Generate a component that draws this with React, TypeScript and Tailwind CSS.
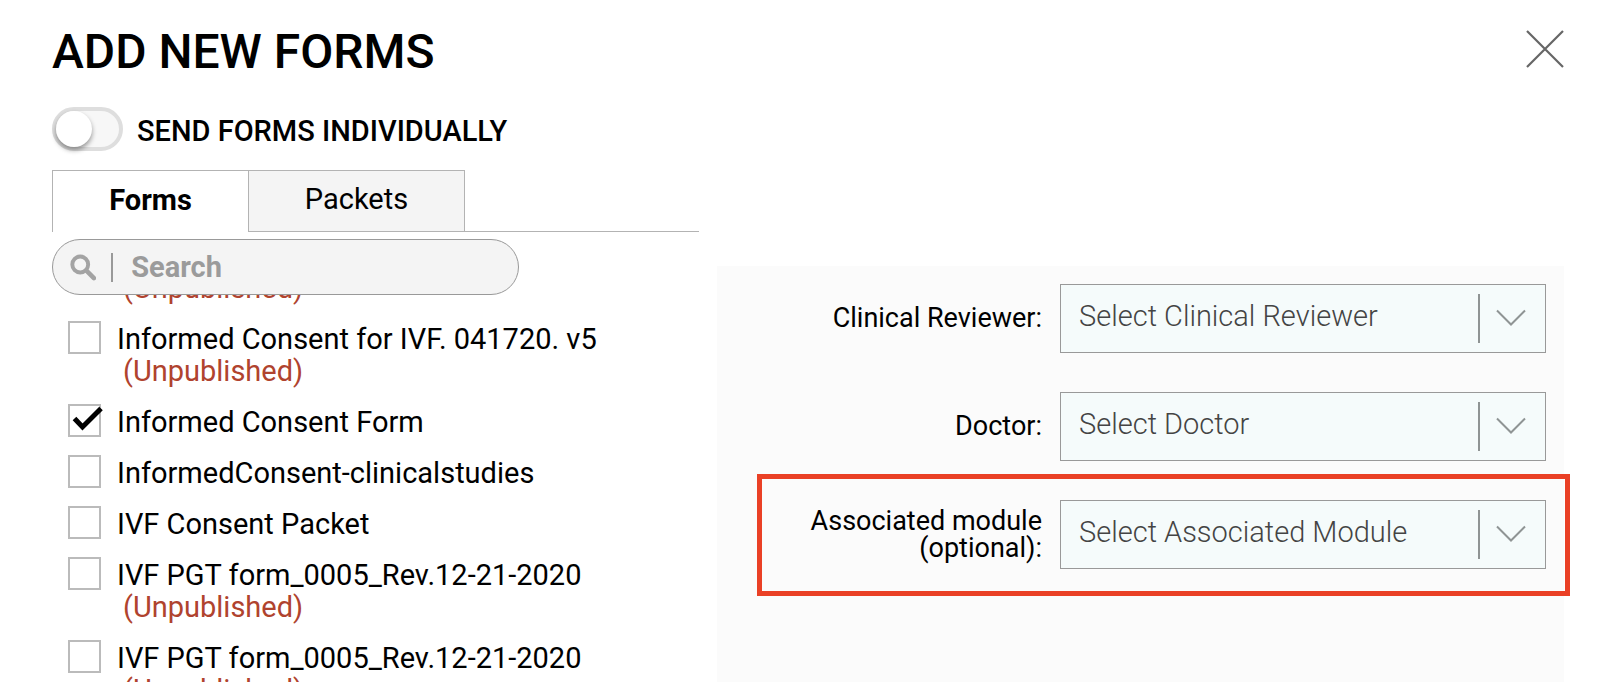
import { useState } from "react";

const forms = [
  { id: "ivf-041720", name: "Informed Consent for IVF. 041720. v5", unpublished: true },
  { id: "icf", name: "Informed Consent Form", unpublished: false },
  { id: "clinical", name: "InformedConsent-clinicalstudies", unpublished: false },
  { id: "ivf-packet", name: "IVF Consent Packet", unpublished: false },
  { id: "pgt-1", name: "IVF PGT form_0005_Rev.12-21-2020", unpublished: true },
  { id: "pgt-2", name: "IVF PGT form_0005_Rev.12-21-2020", unpublished: true },
];

function Unpublished() {
  return <span className="block pl-[6px] text-[#b0432e]">(Unpublished)</span>;
}

function FormRow({ id, name, unpublished, checked, onToggle }: {
  id: string;
  name: string;
  unpublished: boolean;
  checked: boolean;
  onToggle: () => void;
}) {
  return (
    <li className="flex items-start gap-4">
      <span className="relative shrink-0">
        <input
          id={id}
          type="checkbox"
          checked={checked}
          onChange={onToggle}
          className="block size-[33px] appearance-none border-2 border-[#bbbbbb] bg-white"
        />
        {checked && (
          <svg className="pointer-events-none absolute top-0 left-0 h-[33px] w-9" viewBox="0 0 36 33" fill="none">
            <path d="M6.5 14.5L14.5 23L33 4.5" stroke="#000" strokeWidth="5" />
          </svg>
        )}
      </span>
      <label htmlFor={id} className="pt-[2px]">
        {name}
        {unpublished && <Unpublished />}
      </label>
    </li>
  );
}

function SelectRow({ id, label, placeholder, highlighted = false }: {
  id: string;
  label: React.ReactNode;
  placeholder: string;
  highlighted?: boolean;
}) {
  return (
    <div className="relative flex items-center justify-end gap-[18px]">
      <label htmlFor={id} className="text-right text-[27px] leading-[27px]">
        {label}
      </label>
      <div className="relative w-[486px] shrink-0">
        <select
          id={id}
          className="block h-[69px] w-full appearance-none border border-[#999999] bg-[#f5fbfb] pr-20 pb-1 pl-[18px] text-[29px] font-light text-[#444444]"
        >
          <option>{placeholder}</option>
        </select>
        <svg
          className="pointer-events-none absolute top-[10px] right-[19px] h-[50px] w-[50px]"
          viewBox="0 0 50 50"
          fill="none"
          stroke="#8f9494"
          strokeWidth="2"
        >
          <path d="M2 0V49" />
          <path d="M20 16.5L34 30.5L48 16.5" />
        </svg>
      </div>
      {highlighted && (
        <div className="pointer-events-none absolute -top-[26px] -right-6 -bottom-[27px] left-[22px] border-5 border-[#ea4025]"></div>
      )}
    </div>
  );
}

export default function App() {
  const [individually, setIndividually] = useState(false);
  const [tab, setTab] = useState("forms");
  const [selected, setSelected] = useState(["icf"]);

  const toggle = (id: string) =>
    setSelected(selected.includes(id) ? selected.filter((s) => s !== id) : [...selected, id]);

  return (
    <div className="flex h-screen flex-col overflow-hidden bg-white pr-12 pl-[52px] font-['Roboto',sans-serif] text-black">
      {/* Header */}
      <header className="flex items-start justify-between pt-[27px]">
        <h1 className="text-[48px] leading-[50px] font-medium">ADD NEW FORMS</h1>
        <button type="button" aria-label="Close" className="mt-[3px]">
          <svg className="size-[38px]" viewBox="0 0 38 38" fill="none" stroke="#666" strokeWidth="2.2">
            <path d="M1 1L37 37M37 1L1 37" />
          </svg>
        </button>
      </header>

      <label className="mt-[30px] flex items-center gap-[14px] self-start">
        <input
          type="checkbox"
          role="switch"
          checked={individually}
          onChange={() => setIndividually(!individually)}
          className="h-11 w-[71px] appearance-none rounded-full border-4 border-[#dedede] bg-[#f7f7f7] before:block before:size-9 before:rounded-full before:bg-white before:shadow-[0_3px_5px_rgba(0,0,0,0.4)] checked:before:translate-x-[27px]"
        />
        <span className="pt-1 text-[29px] leading-8 font-medium">SEND FORMS INDIVIDUALLY</span>
      </label>

      <div className="mt-[19px] grid min-h-0 flex-1 grid-cols-[647fr_847fr] gap-[18px]">
        {/* Form picker */}
        <section className="flex min-h-0 flex-col text-[29px] leading-8">
          <div role="tablist" className="flex h-[62px] shrink-0">
            <button
              type="button"
              role="tab"
              aria-selected={tab === "forms"}
              onClick={() => setTab("forms")}
              className="w-[196px] border-t border-l border-[#b3b3b3] bg-white pb-1 font-bold"
            >
              Forms
            </button>
            <button
              type="button"
              role="tab"
              aria-selected={tab === "packets"}
              onClick={() => setTab("packets")}
              className="w-[217px] border border-[#b3b3b3] bg-[#f4f4f4] pb-1"
            >
              Packets
            </button>
            <div className="flex-1 border-b border-[#b3b3b3]"></div>
          </div>

          <label className="mt-[7px] flex h-14 w-[467px] shrink-0 items-center rounded-full border border-[#999999] bg-[#f4f4f4] pr-8 pl-[17px]">
            <svg className="size-[31px]" viewBox="0 0 31 31" fill="none" stroke="#a3a3a3">
              <circle cx="12" cy="12" r="9.3" strokeWidth="4.6" />
              <path d="M19 19L28 28" strokeWidth="5.4" strokeLinecap="round" />
            </svg>
            <span className="ml-[15px] h-[29px] w-[2px] bg-[#999999]"></span>
            <input
              type="text"
              aria-label="Search"
              placeholder="Search"
              className="ml-[18px] w-full min-w-0 bg-transparent font-bold outline-none placeholder:text-[#9b9b9b]"
            />
          </label>

          <div className="min-h-0 flex-1 overflow-hidden pl-4">
            {/* The row above is scrolled out, only the tail of its status shows */}
            <ul className="-mt-[23px] flex flex-col gap-[17px]">
              <li className="pl-[49px]">
                <Unpublished />
              </li>
              {forms.map((form) => (
                <FormRow
                  key={form.id}
                  {...form}
                  checked={selected.includes(form.id)}
                  onToggle={() => toggle(form.id)}
                />
              ))}
            </ul>
          </div>
        </section>

        {/* Assignment */}
        <section className="mt-24 flex flex-col gap-[39px] bg-[#fbfbfb] px-[18px] pt-[18px]">
          <SelectRow id="reviewer" label="Clinical Reviewer:" placeholder="Select Clinical Reviewer" />
          <SelectRow id="doctor" label="Doctor:" placeholder="Select Doctor" />
          <SelectRow
            id="module"
            label={<>Associated module<br />(optional):</>}
            placeholder="Select Associated Module"
            highlighted
          />
        </section>
      </div>
    </div>
  );
}
